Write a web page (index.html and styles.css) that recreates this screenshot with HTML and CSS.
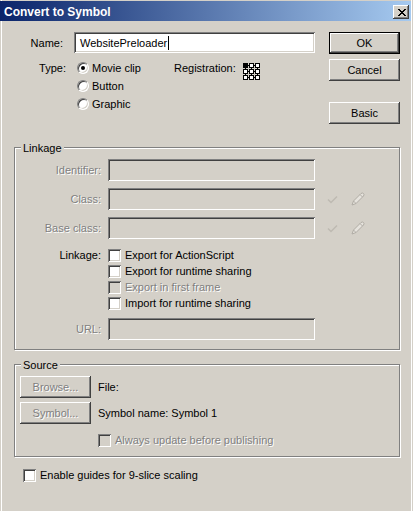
FILE: index.html
```html
<!DOCTYPE html>
<html>
<head>
<meta charset="utf-8">
<title>Convert to Symbol</title>
<link rel="stylesheet" href="styles.css">
</head>
<body>
<div class="window">
  <div class="titlebar">
    <span class="title">Convert to Symbol</span>
    <span class="close-btn">
      <svg width="8" height="7" viewBox="0 0 8 7" shape-rendering="crispEdges">
        <rect x="0" y="0" width="2" height="1"/><rect x="6" y="0" width="2" height="1"/>
        <rect x="1" y="1" width="2" height="1"/><rect x="5" y="1" width="2" height="1"/>
        <rect x="2" y="2" width="4" height="1"/>
        <rect x="3" y="3" width="2" height="1"/>
        <rect x="2" y="4" width="4" height="1"/>
        <rect x="1" y="5" width="2" height="1"/><rect x="5" y="5" width="2" height="1"/>
        <rect x="0" y="6" width="2" height="1"/><rect x="6" y="6" width="2" height="1"/>
      </svg>
    </span>
  </div>

  <div class="top">
    <div class="top-left">
      <div class="name-row">
        <span class="lbl-name">Name:</span>
        <div class="field name-field"><span>WebsitePreloader</span><span class="caret"></span></div>
      </div>
      <div class="type-row">
        <span class="lbl-type">Type:</span>
        <div class="radios">
          <div class="radio-row"><span class="radio checked"></span><span>Movie clip</span></div>
          <div class="radio-row"><span class="radio"></span><span>Button</span></div>
          <div class="radio-row"><span class="radio"></span><span>Graphic</span></div>
        </div>
        <span class="reg-label">Registration:</span>
        <svg class="reg-grid" width="17" height="17" viewBox="0 0 17 17" shape-rendering="crispEdges">
          <g stroke="#000" fill="#fff">
            <rect x="0.5" y="0.5" width="4" height="4" fill="#000"/>
            <rect x="6.5" y="0.5" width="4" height="4"/>
            <rect x="12.5" y="0.5" width="4" height="4"/>
            <rect x="0.5" y="6.5" width="4" height="4"/>
            <rect x="6.5" y="6.5" width="4" height="4"/>
            <rect x="12.5" y="6.5" width="4" height="4"/>
            <rect x="0.5" y="12.5" width="4" height="4"/>
            <rect x="6.5" y="12.5" width="4" height="4"/>
            <rect x="12.5" y="12.5" width="4" height="4"/>
          </g>
          <g fill="#000">
            <rect x="5" y="2" width="1" height="1"/><rect x="11" y="2" width="1" height="1"/>
            <rect x="5" y="8" width="1" height="1"/><rect x="11" y="8" width="1" height="1"/>
            <rect x="5" y="14" width="1" height="1"/><rect x="11" y="14" width="1" height="1"/>
            <rect x="2" y="5" width="1" height="1"/><rect x="2" y="11" width="1" height="1"/>
            <rect x="8" y="5" width="1" height="1"/><rect x="8" y="11" width="1" height="1"/>
            <rect x="14" y="5" width="1" height="1"/><rect x="14" y="11" width="1" height="1"/>
          </g>
        </svg>
      </div>
    </div>
    <div class="buttons">
      <div class="btn default">OK</div>
      <div class="btn cancel">Cancel</div>
      <div class="btn basic">Basic</div>
    </div>
  </div>

  <div class="group linkage">
    <div class="group-title">Linkage</div>
    <div class="field-row first">
      <span class="lbl disabled">Identifier:</span>
      <div class="field off"></div>
    </div>
    <div class="field-row">
      <span class="lbl disabled">Class:</span>
      <div class="field off"></div>
      <svg class="icon-check" width="11" height="9" viewBox="0 0 11 9"><path d="M1 4.5 L4 7.5 L10 1.5" fill="none" stroke="#bebab2" stroke-width="1.5"/></svg>
      <svg class="icon-pencil" width="14" height="14" viewBox="0 0 14 14"><path d="M1 13 L2.5 9 L10 1.5 Q11.5 0.5 12.5 1.5 Q13.5 2.5 12.5 4 L5 11.5 Z" fill="#e6e3dd" stroke="#b0aca5" stroke-width="1"/><path d="M2.5 9 L5 11.5 M9 2.5 L11.5 5" fill="none" stroke="#b0aca5" stroke-width="1"/></svg>
    </div>
    <div class="field-row">
      <span class="lbl disabled">Base class:</span>
      <div class="field off"></div>
      <svg class="icon-check" width="11" height="9" viewBox="0 0 11 9"><path d="M1 4.5 L4 7.5 L10 1.5" fill="none" stroke="#bebab2" stroke-width="1.5"/></svg>
      <svg class="icon-pencil" width="14" height="14" viewBox="0 0 14 14"><path d="M1 13 L2.5 9 L10 1.5 Q11.5 0.5 12.5 1.5 Q13.5 2.5 12.5 4 L5 11.5 Z" fill="#e6e3dd" stroke="#b0aca5" stroke-width="1"/><path d="M2.5 9 L5 11.5 M9 2.5 L11.5 5" fill="none" stroke="#b0aca5" stroke-width="1"/></svg>
    </div>
    <div class="check-block">
      <span class="lbl">Linkage:</span>
      <div class="checks">
        <div class="check-row"><span class="checkbox"></span><span>Export for ActionScript</span></div>
        <div class="check-row"><span class="checkbox"></span><span>Export for runtime sharing</span></div>
        <div class="check-row"><span class="checkbox off"></span><span class="disabled">Export in first frame</span></div>
        <div class="check-row"><span class="checkbox"></span><span>Import for runtime sharing</span></div>
      </div>
    </div>
    <div class="field-row url">
      <span class="lbl disabled">URL:</span>
      <div class="field off"></div>
    </div>
  </div>

  <div class="group source">
    <div class="group-title">Source</div>
    <div class="src-row first">
      <div class="btn disabled">Browse...</div>
      <span>File:</span>
    </div>
    <div class="src-row">
      <div class="btn disabled">Symbol...</div>
      <span>Symbol name: Symbol 1</span>
    </div>
    <div class="always">
      <span class="checkbox off"></span><span class="disabled">Always update before publishing</span>
    </div>
  </div>

  <div class="guides">
    <span class="checkbox"></span><span>Enable guides for 9-slice scaling</span>
  </div>
</div>
</body>
</html>
```

FILE: styles.css
```css
body {
  margin: 0;
  background: #d4d0c8;
  font-family: "Liberation Sans", Arial, sans-serif;
  font-size: 11px;
  color: #000;
}

.window {
  width: 413px;
  height: 511px;
  background: #d4d0c8;
  overflow: hidden;
  box-shadow: inset 1px 0 0 #d4d0c8, inset 2px 0 0 #fff, inset -1px 0 0 #d4d0c8, inset -2px 0 0 #fff;
}

/* title bar */
.titlebar {
  height: 20px;
  width: 411px;
  margin-top: 1px;
  box-sizing: border-box;
  padding: 2px 2px 0 4px;
  display: flex;
  align-items: center;
  justify-content: space-between;
  background: linear-gradient(to right, #0a246a, #a6caf0);
}

.title {
  color: #fff;
  font-weight: bold;
  font-size: 12px;
  line-height: 14px;
}

.close-btn {
  width: 16px;
  height: 14px;
  box-sizing: border-box;
  background: #d4d0c8;
  display: flex;
  align-items: center;
  justify-content: center;
  padding-left: 1px;
  box-shadow: inset -1px -1px 0 #404040, inset 1px 1px 0 #fff, inset -2px -2px 0 #808080, inset 2px 2px 0 #d4d0c8;
}

/* common controls */
.field {
  box-sizing: border-box;
  height: 22px;
  background: #fff;
  box-shadow: inset 1px 1px 0 #808080, inset -1px -1px 0 #fff, inset 2px 2px 0 #404040, inset -2px -2px 0 #d4d0c8;
  flex: none;
}

.field.off {
  background: #d4d0c8;
}

.btn {
  box-sizing: border-box;
  height: 22px;
  display: flex;
  align-items: center;
  justify-content: center;
  background: #d4d0c8;
  box-shadow: inset -1px -1px 0 #404040, inset 1px 1px 0 #fff, inset -2px -2px 0 #808080, inset 2px 2px 0 #d4d0c8;
  flex: none;
}

.btn.default {
  border: 1px solid #000;
}

.disabled {
  color: #808080;
  text-shadow: 1px 1px 0 #fff;
}

.checkbox {
  width: 13px;
  height: 13px;
  box-sizing: border-box;
  background: #fff;
  box-shadow: inset 1px 1px 0 #808080, inset -1px -1px 0 #fff, inset 2px 2px 0 #404040, inset -2px -2px 0 #d4d0c8;
  margin-right: 4px;
  flex: none;
}

.checkbox.off {
  background: #d4d0c8;
}

.radio {
  width: 12px;
  height: 12px;
  box-sizing: border-box;
  border-radius: 50%;
  border: 1px solid;
  border-color: #808080 #fff #fff #808080;
  background: #fff;
  box-shadow: inset 1px 1px 0 #404040, inset -1px -1px 0 #d4d0c8;
  margin-right: 3px;
  display: flex;
  align-items: center;
  justify-content: center;
  flex: none;
}

.radio.checked::after {
  content: "";
  width: 4px;
  height: 4px;
  border-radius: 50%;
  background: #000;
}

/* top section */
.top {
  display: flex;
  padding-top: 11px;
}

.top-left {
  width: 315px;
}

.name-row {
  display: flex;
  align-items: center;
}

.lbl-name {
  width: 63px;
  margin-right: 11px;
  text-align: right;
}

.name-field {
  width: 241px;
  height: 21px;
  display: flex;
  align-items: center;
  padding-left: 6px;
}

.caret {
  width: 1px;
  height: 14px;
  background: #000;
  margin-left: 1px;
}

.type-row {
  display: flex;
  margin-top: 6px;
}

.lbl-type {
  width: 66px;
  margin-right: 11px;
  text-align: right;
  line-height: 18px;
}

.radios {
  width: 97px;
}

.radio-row {
  height: 18px;
  display: flex;
  align-items: center;
}

.reg-label {
  width: 69px;
  line-height: 18px;
}

.reg-grid {
  margin-top: 4px;
  display: block;
}

.buttons {
  margin-left: 14px;
  width: 71px;
  display: flex;
  flex-direction: column;
}

.btn.cancel {
  margin-top: 5px;
}

.btn.basic {
  margin-top: 21px;
}

/* group boxes */
.group {
  box-sizing: border-box;
  width: 386px;
  margin-left: 14px;
  border: 1px solid #808080;
  box-shadow: 1px 1px 0 #fff, inset 1px 1px 0 #fff;
}

.group-title {
  display: table;
  margin: -6px 0 0 6px;
  padding: 0 2px;
  line-height: 13px;
  background: #d4d0c8;
}

.linkage {
  margin-top: 23px;
  padding-bottom: 9px;
}

.field-row {
  display: flex;
  align-items: center;
  margin-top: 7px;
}

.field-row.first {
  margin-top: 4px;
}

.field-row .field {
  width: 207px;
}

.lbl {
  width: 86px;
  margin-right: 7px;
  text-align: right;
  flex: none;
}

.icon-check {
  margin-left: 12px;
  display: block;
}

.icon-pencil {
  margin-left: 13px;
  display: block;
}

.check-block {
  display: flex;
  margin-top: 9px;
}

.check-block .lbl {
  line-height: 15px;
}

.check-row {
  display: flex;
  align-items: flex-start;
  height: 16px;
  line-height: 15px;
}

.check-row .checkbox {
  margin-top: 1px;
}

.field-row.url {
  margin-top: 6px;
}

.source {
  margin-top: 14px;
  padding-bottom: 9px;
}

.src-row {
  display: flex;
  align-items: center;
  margin-top: 4px;
}

.src-row .btn {
  width: 71px;
  margin-left: 5px;
  margin-right: 7px;
}

.always {
  display: flex;
  align-items: center;
  margin: 10px 0 0 83px;
  line-height: 13px;
}

.guides {
  display: flex;
  align-items: center;
  margin: 12px 0 0 23px;
  line-height: 13px;
}
```
